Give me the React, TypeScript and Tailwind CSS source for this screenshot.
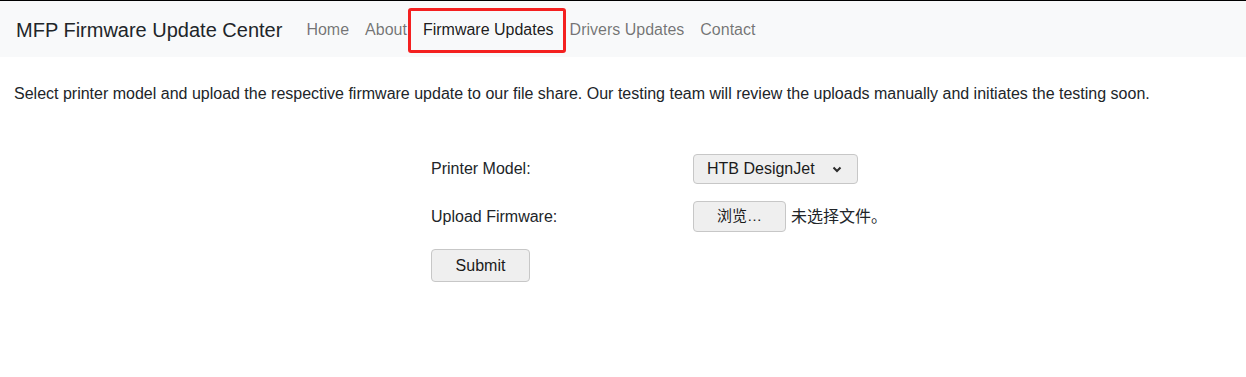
import React, { useState } from 'react'

const navLinks = ['Home', 'About', 'Firmware Updates', 'Drivers Updates', 'Contact']

const App: React.FC = () => {
  const [model, setModel] = useState('HTB DesignJet')
  const [fileName, setFileName] = useState<string | null>(null)

  return (
    <div className="min-h-[377px] bg-white font-['Liberation_Sans',Arial,sans-serif] text-[#212529]">
      {/* Navbar */}
      <nav className="flex h-[57px] items-center border-t border-black bg-[#f8f9fa] px-4 pt-[1px]">
        <span className="mr-4 whitespace-nowrap text-[20px] leading-[30px] text-[#212529]">MFP Firmware Update Center</span>
        <ul className="flex">
          {navLinks.map((link) => (
            <li key={link} className="relative">
              <a
                href="#"
                className={`block whitespace-nowrap px-2 py-2 text-base leading-6 ${
                  link === 'Firmware Updates' ? 'text-black/90' : 'text-black/55'
                }`}
              >
                {link}
              </a>
              {link === 'Firmware Updates' && (
                <span className="pointer-events-none absolute -top-[2px] -bottom-[3px] -left-[7px] -right-[4px] rounded-[3px] border-[3px] border-[#f42020]" />
              )}
            </li>
          ))}
        </ul>
      </nav>

      {/* Content */}
      <div className="px-[14px] pt-[25px]">
        <p className="text-base leading-6">
          Select printer model and upload the respective firmware update to our file share. Our testing team will review the uploads manually and initiates the testing soon.
        </p>

        <form className="mx-auto mt-[47px] w-[384px]" onSubmit={(e) => e.preventDefault()}>
          <div className="flex h-[30px] items-center pt-[1px]">
            <label className="w-[262px] shrink-0 whitespace-nowrap text-base">Printer Model:</label>
            <div className="relative shrink-0">
              <select
                value={model}
                onChange={(e) => setModel(e.target.value)}
                className="h-[30px] w-[165px] appearance-none rounded-[4px] border border-[#c7c7c7] bg-[#efefef] pl-[13px] text-base text-[#1b1b1b] outline-none"
              >
                <option>HTB DesignJet</option>
                <option>HTB LaserJet</option>
              </select>
              <svg
                className="pointer-events-none absolute right-[16px] top-[12px]"
                width="10"
                height="7"
                viewBox="0 0 10 7"
                fill="none"
              >
                <path d="M1.5 1.5 L5 5 L8.5 1.5" stroke="#2b2b2b" strokeWidth="2" />
              </svg>
            </div>
          </div>

          <div className="mt-[18px] flex h-[31px] items-center">
            <label className="w-[262px] shrink-0 whitespace-nowrap text-base">Upload Firmware:</label>
            <label className="flex shrink-0 cursor-pointer items-center whitespace-nowrap">
              <span className="flex h-[31px] w-[93px] items-center justify-center rounded-[4px] border border-[#c7c7c7] bg-[#efefef] text-[15px] text-[#1b1b1b] font-['Liberation_Sans','Noto_Sans_CJK_SC',sans-serif]">
                浏览…
              </span>
              <span className="ml-[5px] text-base font-['Liberation_Sans','Noto_Sans_CJK_SC',sans-serif]">
                {fileName ?? '未选择文件。'}
              </span>
              <input
                type="file"
                className="hidden"
                onChange={(e) => setFileName(e.target.files?.[0]?.name ?? null)}
              />
            </label>
          </div>

          <button
            type="submit"
            className="mt-[17px] h-[33px] w-[99px] rounded-[4px] border border-[#c7c7c7] bg-[#efefef] pt-[1px] text-base text-[#1b1b1b]"
          >
            Submit
          </button>
        </form>
      </div>
    </div>
  )
}

export default App
